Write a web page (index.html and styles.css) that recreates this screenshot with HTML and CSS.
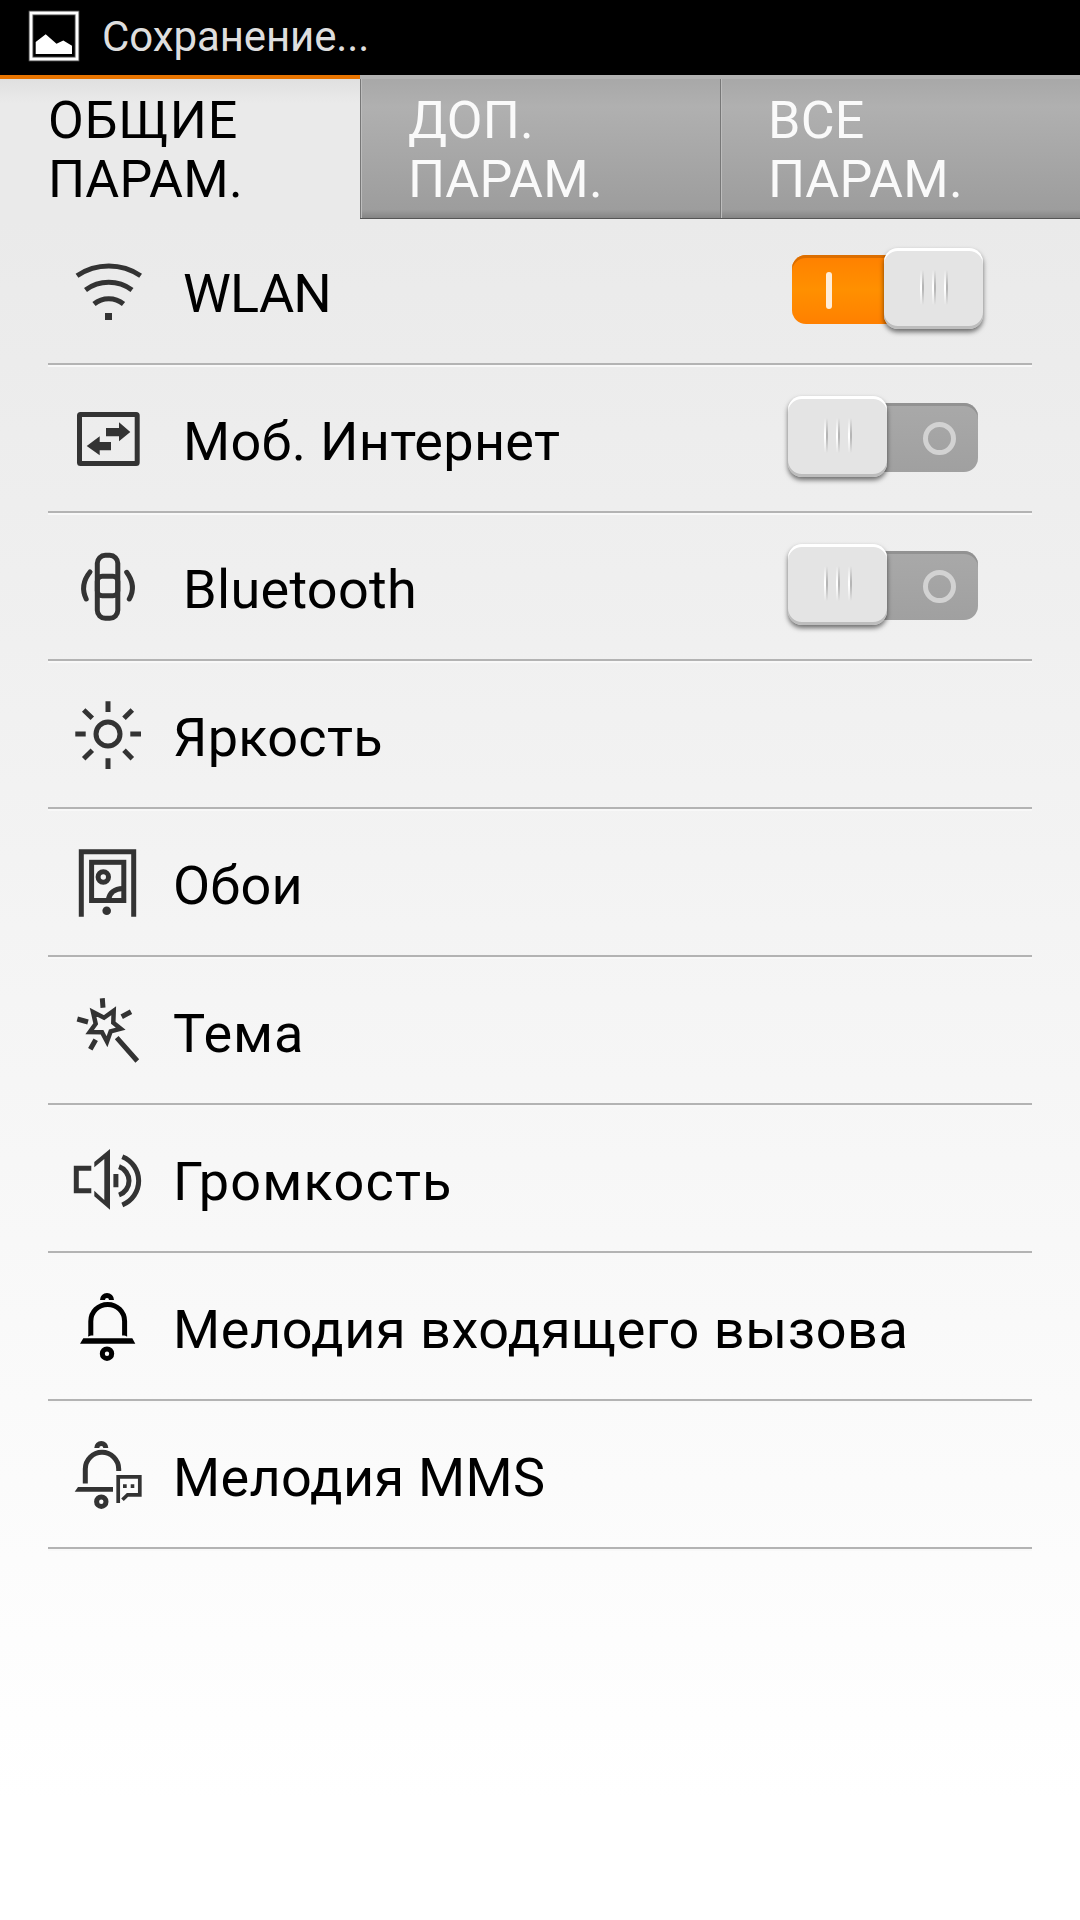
FILE: index.html
```
<!DOCTYPE html>
<html lang="ru">
<head>
    <meta charset="UTF-8">
    <meta name="viewport" content="width=device-width, initial-scale=1.0">
    <title>Настройки</title>
    <link rel="stylesheet" href="styles.css">
</head>
<body>
    <div class="statusbar">
        <svg class="status-icon" viewBox="0 0 52 52">
            <rect x="3" y="3" width="46" height="46" fill="none" stroke="#666" stroke-width="4.6"/>
            <rect x="3" y="3" width="46" height="46" fill="none" stroke="#fff" stroke-width="2.8"/>
            <path d="M7.7 32 17.7 24.3 28.5 33.7 35.3 30.6 44 35.7V44H7.7z" fill="#fff"/>
        </svg>
        <span class="status-text">Сохранение...</span>
    </div>

    <div class="tabs">
        <div class="tab active"><span class="wide">ОБЩИЕ</span><br>ПАРАМ.</div>
        <div class="tab">ДОП.<br>ПАРАМ.</div>
        <div class="tab">ВСЕ<br>ПАРАМ.</div>
    </div>

    <ul class="list">
        <li class="row has-switch">
            <svg class="icon" viewBox="0 0 80 80">
                <path d="M9 24.7A56.8 56.8 0 0 1 72.6 24.7M17.5 38.9A39 39 0 0 1 64 38.9M26 53A23 23 0 0 1 55.5 53"/>
                <rect class="fill" x="37" y="62" width="7" height="7"/>
            </svg>
            <span class="label wlan">WLAN</span>
            <div class="switch on"><div class="track"></div><div class="knob"><i></i><i></i><i></i></div></div>
        </li>
        <li class="row has-switch">
            <svg class="icon" viewBox="0 0 80 80">
                <rect x="11.5" y="15.5" width="57.7" height="49" rx="1"/>
                <path class="fill" d="M38 29H51V23.3L62.3 33 51 42.3V37.3H38zM43 43H31.7V37.3L18.7 47 31.7 56.3V51.3H43z"/>
            </svg>
            <span class="label">Моб. Интернет</span>
            <div class="switch"><div class="track"></div><div class="knob"><i></i><i></i><i></i></div></div>
        </li>
        <li class="row has-switch">
            <svg class="icon" viewBox="0 0 80 80">
                <rect x="29.3" y="8.3" width="20.5" height="63" rx="8"/>
                <rect x="29.3" y="29.3" width="20.5" height="19.4" rx="5"/>
                <path class="round" d="M22 25Q11.5 38 18.2 52M58.7 25.3Q68.7 39 61.3 52"/>
            </svg>
            <span class="label">Bluetooth</span>
            <div class="switch"><div class="track"></div><div class="knob"><i></i><i></i><i></i></div></div>
        </li>
        <li class="row">
            <svg class="icon" viewBox="0 0 80 80">
                <circle cx="40" cy="39" r="12"/>
                <path d="M40 6.3V17M40 63.3V74M7.3 39H17.7M62.3 39H73M15.7 15 24.3 23.3M64.3 15 56 23.3M15.7 63.7 24.3 55.3M64.3 63.7 56 55.3"/>
            </svg>
            <span class="label">Яркость</span>
        </li>
        <li class="row">
            <svg class="icon" viewBox="0 0 80 80">
                <path d="M13.3 73.7V8.7H65.7V73.7"/>
                <rect x="23.6" y="19.3" width="32.2" height="38.2"/>
                <circle cx="35.3" cy="34" r="5.2"/>
                <path d="M40.3 57Q42 46 55 45.5"/>
                <circle class="fill" cx="38.7" cy="67.7" r="4.3"/>
            </svg>
            <span class="label wallpaper">Обои</span>
        </li>
        <li class="row">
            <svg class="icon" viewBox="0 0 80 80">
                <path class="star" d="M25 21 36 26.7 45.7 19.7 45.3 31.7 52.7 37.7 42.7 40.3 39 50.7 34 41.3 21.7 41 27.7 32.7z"/>
                <path d="M34.3 7.3 35 16.7M9.3 28 20 31M53.7 25.7 63 20.7M27.7 48.7 22.3 58.3M48.7 46.7 69.3 70"/>
            </svg>
            <span class="label theme">Тема</span>
        </li>
        <li class="row">
            <svg class="icon" viewBox="0 0 80 80">
                <path d="M23.3 29.3H8.3V51.7H23.3"/>
                <path class="fill" d="M26.3 23 42 10V70.7L26.3 57.3V51.7L36.3 61V20L26.3 28.3z"/>
                <path d="M47.9 35V48.3M51 27.7A15 15 0 0 1 51 56M54.3 17.7A26 26 0 0 1 54.3 66"/>
            </svg>
            <span class="label volume">Громкость</span>
        </li>
        <li class="row">
            <svg class="icon dark" viewBox="0 0 80 80">
                <path d="M34.5 13A4.5 4.5 0 0 1 43.5 13"/>
                <path d="M22.8 48.6V34.3A16.9 16.9 0 0 1 56.6 34.3V48.6"/>
                <path class="fill" d="M20.3 48V49.7L25.3 46.5zM59.1 48V49.7L54.1 46.5zM15.3 51.3H64.3L67.3 56.7H12z"/>
                <circle cx="39" cy="66.7" r="4.7"/>
            </svg>
            <span class="label ringtone">Мелодия входящего вызова</span>
        </li>
        <li class="row">
            <svg class="icon" viewBox="0 0 80 80">
                <path d="M28.8 13A4.5 4.5 0 0 1 37.8 13"/>
                <path d="M17.3 48.5V34A16.7 16.7 0 0 1 50.7 34V36"/>
                <path class="fill" d="M10 52H45V56.7H6.7zM55 49.3h3.7V53H55zM62.7 49.3H66.3V53H62.7z"/>
                <circle cx="33.3" cy="66.7" r="4.7"/>
                <path class="bubble" d="M50.2 68V41.9H71.8V59.8H59.6L54.5 64.8"/>
            </svg>
            <span class="label">Мелодия MMS</span>
        </li>
    </ul>
</body>
</html>
```
FILE: styles.css
```
*,
*::after {
    box-sizing: border-box;
}
body {
    margin: 0;
    height: 1920px;
    overflow: hidden;
    font-family: Roboto, "Noto Sans", sans-serif;
    color: #000;
    background: linear-gradient(#e9e9e9 75px, #eaeaea 219px, #f5f5f5 1000px, #fff 1800px);
}

/* status bar */
.statusbar {
    display: flex;
    align-items: center;
    height: 75px;
    padding-left: 28px;
    background: #000;
}
.status-icon {
    width: 52px;
    height: 52px;
    margin-top: -3px;
}
.status-text {
    margin: -2px 0 0 22px;
    font-size: 42px;
    letter-spacing: -0.1px;
    color: #dedede;
}

/* tabs */
.tabs {
    display: flex;
    height: 144px;
}
.tab {
    width: 360px;
    padding: 12px 0 0 48px;
    font-size: 52px;
    line-height: 59px;
    letter-spacing: 0.25px;
    color: #fafafa;
    border-top: 4px solid #b2b2b2;
    border-bottom: 1px solid #555;
    background: linear-gradient(#a8a8a8, #b0b0b0 20%, #9d9d9d 94%, #858585);
    box-shadow: inset 1px 0 #777, inset 2px 0 #bdbdbd;
}
.tab.active {
    color: #000;
    border-top-color: #e87400;
    border-bottom: none;
    background: linear-gradient(#e0e0e0, #eaeaea 24px);
    box-shadow: none;
}
.wide {
    letter-spacing: 0.9px;
}

/* settings list */
.list {
    list-style: none;
    margin: -2px 48px 0;
    padding: 0;
}
.row {
    display: flex;
    align-items: flex-start;
    height: 148px;
    padding: 34px 49px 0 20px;
    border-bottom: 2px solid #b3b3b3;
    box-shadow: 0 2px #f8f8f8;
}
.icon {
    width: 80px;
    height: 80px;
    fill: none;
    stroke: #333;
    stroke-width: 5;
}
.icon .fill {
    fill: #333;
    stroke: none;
}
.icon .round {
    stroke-linecap: round;
}
.icon .star {
    stroke-width: 4.5;
}
.icon .bubble {
    stroke-width: 3.7;
}
.icon.dark {
    stroke: #000;
}
.icon.dark .fill {
    fill: #000;
}
.label {
    flex: 1;
    margin: 11px 0 0 25px;
    font-size: 54px;
    line-height: 64px;
    letter-spacing: 0.3px;
    white-space: nowrap;
}
.has-switch .label {
    margin-left: 35px;
}
.label.wlan {
    letter-spacing: -0.8px;
}
.label.wallpaper {
    letter-spacing: 0.2px;
}
.label.theme {
    letter-spacing: 0.9px;
}
.label.volume {
    letter-spacing: 1.2px;
}
.label.ringtone {
    letter-spacing: 0.55px;
}

/* switches */
.switch {
    position: relative;
    width: 195px;
    height: 81px;
    margin-top: -3px;
    padding: 7px 5px 0 4px;
}
.track {
    height: 69px;
    border-radius: 14px;
    background: linear-gradient(#a9a9a9, #a0a0a0);
    box-shadow: inset 0 3px #929292;
}
.on .track {
    background: linear-gradient(#ff8000, #ff9000 50%, #ff8000);
    box-shadow: inset 0 3px #dc6e00;
}
.track::after {
    content: "";
    position: absolute;
    left: 135px;
    top: 26px;
    width: 33px;
    height: 33px;
    border: 5px solid #d2d2d2;
    border-radius: 50%;
}
.on .track::after {
    left: 38px;
    top: 24px;
    width: 6px;
    height: 37px;
    border: none;
    border-radius: 3px;
    background: #ffedd8;
}
.knob {
    position: absolute;
    left: 0;
    top: 0;
    display: flex;
    gap: 8px;
    width: 99px;
    height: 81px;
    padding: 22px 0 0 36px;
    border-radius: 14px;
    background: #e4e4e4;
    box-shadow: inset 0 3px #fff, inset 0 -3px #bdbdbd, 0 3px 5px rgba(0, 0, 0, 0.55);
}
.on .knob {
    left: 96px;
}
.knob i {
    width: 4px;
    height: 35px;
    background: linear-gradient(#e4e4e4, rgba(228, 228, 228, 0) 45%, rgba(228, 228, 228, 0) 55%, #e4e4e4), linear-gradient(90deg, #fff 50%, #b5b5b5 50%);
}
```
